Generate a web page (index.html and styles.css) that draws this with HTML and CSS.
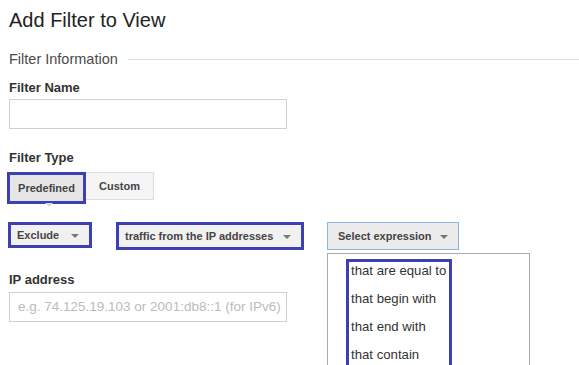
FILE: index.html
```html
<!DOCTYPE html>
<html>
<head>
<meta charset="utf-8">
<link rel="stylesheet" href="styles.css">
</head>
<body>
<div class="page">
  <h1 class="title">Add Filter to View</h1>
  <div class="section-head">
    <span class="section-label">Filter Information</span>
    <span class="section-rule"></span>
  </div>
  <div class="field-label label-name">Filter Name</div>
  <div class="text-input name-input"></div>
  <div class="field-label label-type">Filter Type</div>
  <div class="toggle">
    <div class="toggle-btn predefined hl">Predefined</div>
    <div class="toggle-btn custom">Custom</div>
  </div>
  <div class="selects">
    <div class="select exclude hl">Exclude<span class="caret"></span></div>
    <div class="select traffic hl">traffic from the IP addresses<span class="caret"></span></div>
    <div class="expr-wrap">
      <div class="select expr">Select expression<span class="caret"></span></div>
      <div class="menu">
        <div class="menu-hl">
          <div class="menu-item">that are equal to</div>
          <div class="menu-item">that begin with</div>
          <div class="menu-item">that end with</div>
          <div class="menu-item">that contain</div>
        </div>
      </div>
    </div>
  </div>
  <div class="field-label label-ip">IP address</div>
  <div class="text-input placeholder">e.g. 74.125.19.103 or 2001:db8::1 (for IPv6)</div>
</div>
</body>
</html>
```

FILE: styles.css
```css
html, body {
  margin: 0;
  padding: 0;
  background: #fff;
  overflow: hidden;
}
body {
  font-family: "Liberation Sans", Arial, sans-serif;
  color: #222;
  width: 579px;
  height: 365px;
}
.page {
  padding: 0 0 0 9px;
}
.title {
  margin: 0;
  padding-top: 8px;
  font-size: 20px;
  font-weight: normal;
  line-height: 24px;
  color: #222;
}
.section-head {
  display: flex;
  align-items: center;
  margin-top: 18px;
  height: 18px;
}
.section-label {
  font-size: 14.5px;
  color: #4a4a4a;
  line-height: 18px;
}
.section-rule {
  flex: 1;
  height: 1px;
  background: #ddd;
  margin-left: 10px;
  margin-top: 1px;
}
.field-label {
  font-size: 13px;
  font-weight: bold;
  color: #333;
  line-height: 16px;
}
.label-name { margin-top: 12px; }
.text-input {
  box-sizing: border-box;
  width: 278px;
  height: 30px;
  border: 1px solid #d0d0d0;
  font-size: 13.5px;
  line-height: 28px;
  padding-left: 8px;
  color: #bbb;
  white-space: nowrap;
}
.name-input { margin-top: 3px; }
.label-type { margin-top: 21px; }
.toggle {
  display: flex;
  margin-top: 6px;
  margin-left: -2px;
  height: 32px;
  align-items: flex-start;
}
.toggle-btn {
  box-sizing: border-box;
  height: 28px;
  font-size: 11px;
  font-weight: bold;
  color: #444;
  line-height: 26px;
  border: 1px solid #ddd;
  background: #f5f5f5;
}
.predefined {
  position: relative;
  width: 79px;
  height: 32px;
  text-align: center;
  background: #e6e6e6;
  line-height: 26px;
}
.predefined::after {
  content: "";
  position: absolute;
  left: 35px;
  bottom: -6px;
  border-left: 4px solid transparent;
  border-right: 4px solid transparent;
  border-top: 4px solid #ddd;
}
.custom {
  width: 68px;
  text-align: center;
  border-left: none;
}
.hl {
  border: 3px solid #3d3fb5;
}
.selects {
  display: flex;
  align-items: flex-start;
  margin-top: 18px;
  margin-left: -1px;
  height: 40px;
}
.select {
  box-sizing: border-box;
  display: flex;
  align-items: center;
  font-size: 11px;
  font-weight: bold;
  color: #444;
  background: #f1f1f1;
  border: 1px solid #ddd;
  padding-left: 7px;
}
.select.hl {
  border: 3px solid #3d3fb5;
  padding-left: 6px;
}
.caret {
  display: inline-block;
  border-left: 4px solid transparent;
  border-right: 4px solid transparent;
  border-top: 4px solid #777;
  margin-left: auto;
  margin-right: 10px;
  margin-top: 2px;
}
.exclude {
  width: 84px;
  height: 26px;
}
.traffic {
  width: 188px;
  height: 28px;
  margin-left: 24px;
}
.expr-wrap {
  position: relative;
  margin-left: 23px;
}
.expr {
  width: 132px;
  height: 28px;
  border: 1px solid #8fb3e3;
  background: #ececec;
  padding-left: 10px;
}
.menu {
  position: absolute;
  top: 31px;
  left: 0;
  width: 203px;
  height: 140px;
  box-sizing: border-box;
  border: 1px solid #aaa;
  background: #fff;
  z-index: 2;
  padding: 5px 0 0 18px;
}
.menu-hl {
  box-sizing: border-box;
  width: 106px;
  border: 3px solid #3d3fb5;
  padding: 0 0 0 2px;
}
.menu-item {
  font-size: 13.2px;
  color: #333;
  line-height: 18px;
  padding-bottom: 10px;
  white-space: nowrap;
}
.label-ip { margin-top: 10px; }
.placeholder {
  margin-top: 4px;
}
```
